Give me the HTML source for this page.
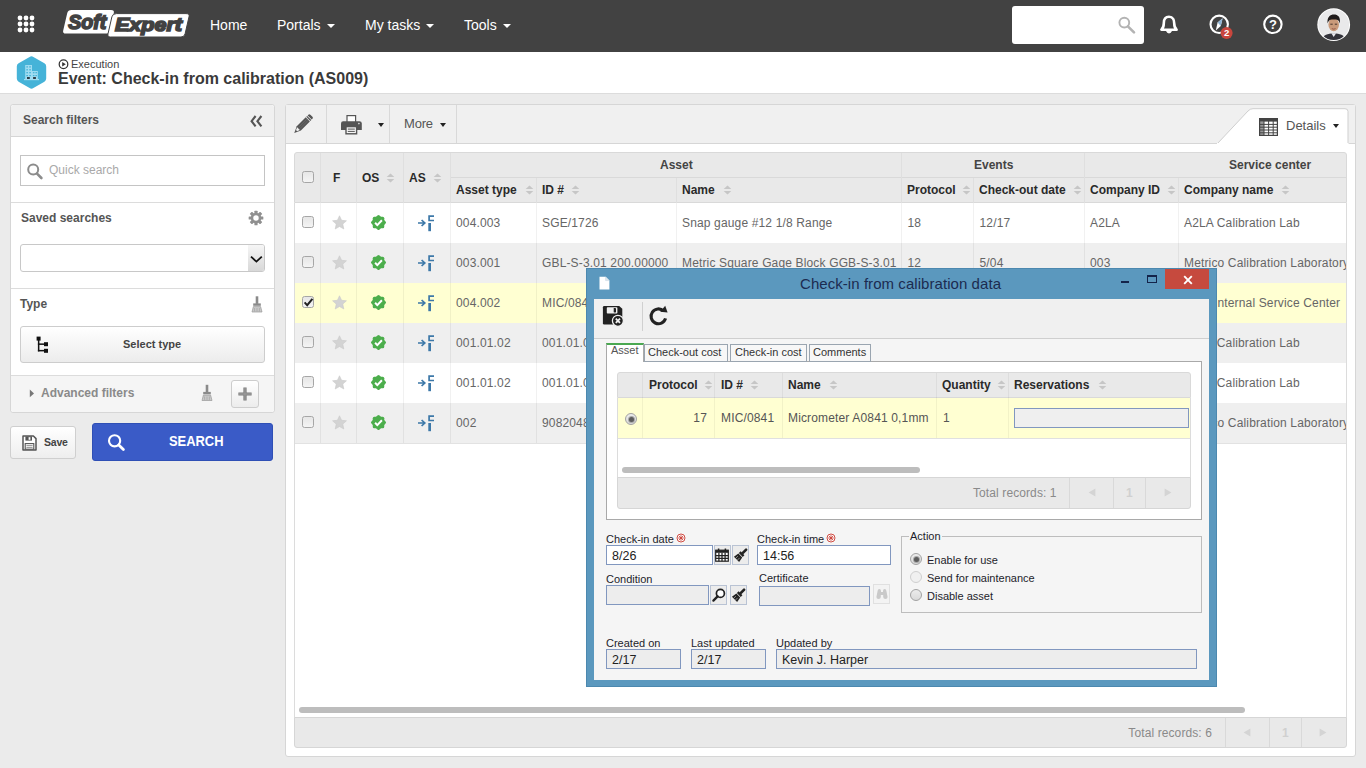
<!DOCTYPE html>
<html lang="en">
<head>
<meta charset="utf-8">
<title>Event: Check-in from calibration (AS009)</title>
<style>
*{box-sizing:border-box;margin:0;padding:0}
html,body{width:1366px;height:768px;overflow:hidden}
body{position:relative;background:#ebebeb;font-family:"Liberation Sans",Arial,sans-serif;font-size:12px;color:#555}
.abs{position:absolute}
.t{position:absolute;white-space:nowrap;line-height:1}
svg{position:absolute;overflow:visible}

/* ===== NAV ===== */
#nav{left:0;top:0;width:1366px;height:52px;background:#424242}
.navt{color:#fff;font-size:14px;top:18px}
.caret{position:absolute;width:0;height:0;border-left:4px solid transparent;border-right:4px solid transparent;border-top:4px solid #fff}
#srch{left:1012px;top:6px;width:132px;height:38px;background:#fff;border-radius:3px}
#titlebar{left:0;top:52px;width:1366px;height:42px;background:#fff;border-bottom:1px solid #dcdcdc}

/* ===== SIDEBAR ===== */
#side{left:10px;top:104px;width:265px;height:309px;background:#fff;border:1px solid #d6d6d6;border-radius:3px}
.sh{font-weight:bold;color:#555;font-size:12px}
.line{position:absolute;background:#dcdcdc;height:1px}
.vline{position:absolute;background:#dcdcdc;width:1px}

/* ===== MAIN ===== */
#main{left:285px;top:104px;width:1071px;height:653px;background:#fff;border:1px solid #d6d6d6;border-radius:3px}
#mtool{left:286px;top:105px;width:1069px;height:39px;background:#f0f0f0;border-bottom:1px solid #d6d6d6}

/* grid */
.gh{background:#e9e9e9}
.hb{font-weight:bold;color:#2a2a2a;font-size:12px}
.cell{color:#666;font-size:12px;letter-spacing:0.15px}
.cb{position:absolute;width:12px;height:12px;border:1px solid #a6a6a6;border-radius:2.5px;background:linear-gradient(#e6e6e6,#f4f4f4)}
.srt{}
.fl{font-size:11px;color:#1d1d2b}
.fv{font-size:12.5px;color:#222;margin-top:1px}
.fi{background:#fff;border:1px solid #8197bf}
.fi.dis{background:#ededed}
.fb{width:17px;height:20px;background:#ececec;border:1px solid #b9c3d4}
.fb.dis{background:#f3f3f3;border-color:#e0e0e0}
.rd{position:absolute;width:12px;height:12px;border-radius:50%;border:1px solid #a2a2a2;background:linear-gradient(#ececec,#dadada)}
.rd.on::after{content:"";position:absolute;left:2.5px;top:2.5px;width:5px;height:5px;border-radius:50%;background:#5c5c5c;box-shadow:0 0 0 1px #a8a8a8}
.rd.off{border-color:#cfcfcf;background:#f0f0f0}
</style>
</head>
<body>

<!-- ================= NAV BAR ================= -->
<div id="nav" class="abs"></div>
<svg id="appgrid" style="left:0;top:0" width="52" height="52" viewBox="0 0 52 52">
  <g fill="#fff">
    <circle cx="20" cy="18" r="2.4"/><circle cx="26" cy="18" r="2.4"/><circle cx="32" cy="18" r="2.4"/>
    <circle cx="20" cy="24" r="2.4"/><circle cx="26" cy="24" r="2.4"/><circle cx="32" cy="24" r="2.4"/>
    <circle cx="20" cy="30" r="2.4"/><circle cx="26" cy="30" r="2.4"/><circle cx="32" cy="30" r="2.4"/>
  </g>
</svg>
<svg id="logo" style="left:55px;top:0" width="145" height="52" viewBox="55 0 145 52">
  <path d="M71.5 10 H111 Q114.6 10 113.8 13.2 L109.9 30.4 Q109.2 33.5 105.8 33.5 H65.8 Q62.4 33.5 63.2 30.4 L67.2 13.2 Q68 10 71.5 10Z" fill="#fff"/>
  <path d="M116.5 13.6 H186 Q189.8 13.6 189 16.8 L185.1 33.8 Q184.4 37 181 37 H110.6 Q107.2 37 108 33.8 L111.9 16.8 Q112.6 13.6 116.5 13.6Z" fill="#fff" stroke="#424242" stroke-width="1"/>
  <text x="68.2" y="29" font-family="Liberation Sans, Arial, sans-serif" font-weight="bold" font-style="italic" font-size="19.5" fill="#424242" stroke="#424242" stroke-width="1.6" textLength="38" lengthAdjust="spacingAndGlyphs">Soft</text>
  <text x="115" y="31.2" font-family="Liberation Sans, Arial, sans-serif" font-weight="bold" font-style="italic" font-size="18.5" fill="#424242" stroke="#424242" stroke-width="1.6" textLength="67" lengthAdjust="spacingAndGlyphs">Expert</text>
</svg>
<div id="navitems">
  <span class="t navt" style="left:210px">Home</span>
  <span class="t navt" style="left:277px">Portals</span><i class="caret" style="left:327px;top:24px"></i>
  <span class="t navt" style="left:365px">My tasks</span><i class="caret" style="left:426px;top:24px"></i>
  <span class="t navt" style="left:464px">Tools</span><i class="caret" style="left:503px;top:24px"></i>
</div>
<div id="srch" class="abs"></div>
<svg style="left:1112px;top:12px" width="28" height="28" viewBox="1112 12 28 28">
  <circle cx="1124.3" cy="22.6" r="4.9" fill="none" stroke="#b3b3b3" stroke-width="1.9"/>
  <path d="M1127.9 26.3 L1134 32.4" stroke="#b3b3b3" stroke-width="2.6" stroke-linecap="round"/>
</svg>
<!-- bell -->
<svg style="left:1156px;top:12px" width="26" height="26" viewBox="1156 12 26 26">
  <path d="M1169 16.8 C1164.9 16.8 1163.8 20.2 1163.8 23.2 C1163.8 27 1162.8 28.4 1161.4 29.7 H1176.6 C1175.2 28.4 1174.2 27 1174.2 23.2 C1174.2 20.2 1173.1 16.8 1169 16.8Z" fill="none" stroke="#fff" stroke-width="2.6" stroke-linejoin="round"/>
  <path d="M1166.6 31.6 Q1169 34.6 1171.4 31.6Z" fill="#fff" stroke="#fff" stroke-width="1"/>
</svg>
<!-- compass + badge -->
<svg style="left:1205px;top:10px" width="32" height="32" viewBox="1205 10 32 32">
  <circle cx="1219.2" cy="24.3" r="8.7" fill="none" stroke="#fff" stroke-width="2.1"/>
  <path d="M1222.6 18.2 L1220.8 26 L1215.8 30.4 L1217.6 22.6Z" fill="#fff"/>
  <path d="M1222.6 18.2 L1220.8 26 L1217.6 22.6Z" fill="#8fb4d4"/>
  <circle cx="1226.6" cy="33" r="6" fill="#c9463d"/>
  <text x="1226.6" y="36.4" text-anchor="middle" font-family="Liberation Sans, Arial, sans-serif" font-weight="bold" font-size="9.5" fill="#fff">2</text>
</svg>
<!-- help -->
<svg style="left:1260px;top:12px" width="26" height="26" viewBox="1260 12 26 26">
  <circle cx="1272.9" cy="24.3" r="8.7" fill="none" stroke="#fff" stroke-width="2.1"/>
  <text x="1272.9" y="29" text-anchor="middle" font-family="Liberation Sans, Arial, sans-serif" font-weight="bold" font-size="13" fill="#fff">?</text>
</svg>
<!-- avatar -->
<svg style="left:1316px;top:7px" width="36" height="36" viewBox="1316 7 36 36">
  <defs><clipPath id="avc"><circle cx="1333.7" cy="24.7" r="15.4"/></clipPath></defs>
  <circle cx="1333.7" cy="24.7" r="16.4" fill="#fff"/>
  <g clip-path="url(#avc)">
    <rect x="1316" y="7" width="36" height="36" fill="#e9e9ea"/>
    <path d="M1322 42 C1322 35 1327 33.5 1333.7 33.5 C1340.4 33.5 1345.5 35 1345.5 42Z" fill="#33333a"/>
    <path d="M1331.3 33.2 L1333.7 37 L1336.1 33.2Z" fill="#e8e8ee"/>
    <ellipse cx="1333.7" cy="24.6" rx="5.3" ry="6.6" fill="#c99a7a"/>
    <path d="M1327.6 23.6 C1326.8 16.8 1330.4 14.6 1333.9 14.6 C1338 14.6 1340.8 17.2 1339.8 23.6 C1339.2 20.4 1338 19.2 1333.7 19.4 C1329.6 19.2 1328.4 20.6 1327.6 23.6Z" fill="#1e1a1a"/>
    <path d="M1330.3 24.2 h2.4 M1334.8 24.2 h2.4" stroke="#3a2a24" stroke-width="0.9"/>
    <path d="M1331.8 28.6 q1.9 1.1 3.8 0" stroke="#8a4a3c" stroke-width="0.8" fill="none"/>
  </g>
</svg>

<!-- ================= TITLE BAR ================= -->
<div id="titlebar" class="abs"></div>
<svg style="left:14px;top:54px" width="36" height="38" viewBox="14 54 36 38">
  <path d="M29.6 56.9 Q31.5 55.8 33.4 56.9 L44.4 63.2 Q46.2 64.3 46.2 66.4 V78.6 Q46.2 80.7 44.4 81.8 L33.4 88.1 Q31.5 89.2 29.6 88.1 L18.6 81.8 Q16.8 80.7 16.8 78.6 V66.4 Q16.8 64.3 18.6 63.2Z" fill="#45b3d8"/>
  <g fill="#9fdcf1">
    <rect x="25.2" y="65" width="6.8" height="14.6"/>
    <rect x="32" y="71" width="5.8" height="8.6"/>
    <rect x="24" y="79" width="15" height="1.2"/>
  </g>
  <g fill="#45b3d8">
    <rect x="26.3" y="66.3" width="1.7" height="1.2"/><rect x="29.2" y="66.3" width="1.7" height="1.2"/>
    <rect x="26.3" y="69.2" width="1.7" height="1.2"/><rect x="29.2" y="69.2" width="1.7" height="1.2"/>
    <rect x="26.3" y="72.1" width="1.7" height="1.2"/><rect x="29.2" y="72.1" width="1.7" height="1.2"/>
    <rect x="26.3" y="75" width="1.7" height="1.2"/><rect x="29.2" y="75" width="1.7" height="1.2"/>
    <rect x="32.9" y="72.1" width="1.6" height="1.2"/><rect x="35.4" y="72.1" width="1.6" height="1.2"/>
    <rect x="32.9" y="75" width="1.6" height="1.2"/><rect x="35.4" y="75" width="1.6" height="1.2"/>
  </g>
  <g fill="#2f3f49"><rect x="27" y="77" width="2.8" height="2"/><rect x="33.1" y="77" width="2.8" height="2"/></g>
</svg>
<svg style="left:58px;top:59px" width="11" height="11" viewBox="0 0 11 11"><circle cx="5.5" cy="5.2" r="4.3" fill="none" stroke="#333" stroke-width="1.25"/><path d="M4.2 3 V7.4 L7.8 5.2Z" fill="#333"/></svg>
<span class="t" style="left:71px;top:59px;font-size:11px;color:#444">Execution</span>
<span class="t" id="ttl" style="left:58px;top:71px;font-size:16px;color:#3a3a3a;font-weight:bold">Event: Check-in from calibration (AS009)</span>

<!-- ================= SIDEBAR ================= -->
<div id="side" class="abs"></div>
<div class="abs" style="left:11px;top:105px;width:263px;height:32px;background:#f0f0f0;border-bottom:1px solid #d6d6d6;border-radius:3px 3px 0 0"></div>
<span class="t sh" style="left:23px;top:114px">Search filters</span>
<svg style="left:248px;top:114px" width="16" height="14" viewBox="0 0 16 14">
  <path d="M7.6 2 L3.6 7.2 L7.6 12.4 M13.4 2 L9.4 7.2 L13.4 12.4" fill="none" stroke="#555" stroke-width="2.1"/>
</svg>
<!-- quick search -->
<div class="abs" style="left:20px;top:155px;width:245px;height:31px;background:#fff;border:1px solid #c4c4c4"></div>
<svg style="left:25px;top:161px" width="20" height="20" viewBox="0 0 20 20">
  <circle cx="8.2" cy="8.6" r="5" fill="none" stroke="#8c8c8c" stroke-width="2"/>
  <path d="M12 12.6 L16.4 17" stroke="#8c8c8c" stroke-width="2.6" stroke-linecap="round"/>
</svg>
<span class="t" style="left:49px;top:164px;font-size:12px;color:#a9a9a9">Quick search</span>
<div class="line" style="left:11px;top:202px;width:263px"></div>
<!-- saved searches -->
<span class="t sh" style="left:21px;top:212px">Saved searches</span>
<svg style="left:248.4px;top:210.4px" width="16" height="16" viewBox="-8.5 -8.5 17 17">
  <g fill="#909090">
    <rect x="-1.7" y="-7.8" width="3.4" height="15.6" rx="0.6"/>
    <rect x="-1.7" y="-7.8" width="3.4" height="15.6" rx="0.6" transform="rotate(45)"/>
    <rect x="-1.7" y="-7.8" width="3.4" height="15.6" rx="0.6" transform="rotate(90)"/>
    <rect x="-1.7" y="-7.8" width="3.4" height="15.6" rx="0.6" transform="rotate(135)"/>
    <circle r="5.6"/>
  </g>
  <circle r="2.9" fill="#fff"/>
</svg>
<div class="abs" style="left:20px;top:244px;width:245px;height:28px;background:#fff;border:1px solid #c8c8c8;border-radius:3px"></div>
<div class="abs" style="left:248px;top:245px;width:16px;height:26px;background:linear-gradient(#f6f6f6,#d8d8d8);border-radius:0 2px 2px 0"></div>
<svg style="left:250px;top:254.5px" width="13" height="9" viewBox="0 0 13 9"><path d="M1 1.6 L6.4 6.6 L11.8 1.6" fill="none" stroke="#111" stroke-width="1.8"/></svg>
<div class="line" style="left:11px;top:288px;width:263px"></div>
<!-- type -->
<span class="t sh" style="left:20px;top:298px">Type</span>
<svg class="brush" style="left:251px;top:296px" width="12" height="17" viewBox="0 0 12 17">
  <rect x="4.7" y="0.3" width="2.6" height="7.6" fill="#8a8a8a"/>
  <rect x="2.2" y="7.4" width="7.6" height="2.4" fill="#8a8a8a"/>
  <path d="M2.4 10.6 H9.6 L11 16 H1Z" fill="#c9c9c9" stroke="#9a9a9a" stroke-width="0.7"/>
  <path d="M3.6 12 V15.4 M6 12 V15.4 M8.4 12 V15.4" stroke="#9a9a9a" stroke-width="0.6"/>
</svg>
<div class="abs" style="left:20px;top:326px;width:245px;height:37px;background:linear-gradient(#fff,#ececec);border:1px solid #cdcdcd;border-radius:3px"></div>
<svg style="left:36px;top:336px" width="14" height="18" viewBox="0 0 14 18">
  <g fill="#111">
    <rect x="0.6" y="0.6" width="4" height="4"/>
    <rect x="1.9" y="4" width="1.5" height="11.4"/>
    <rect x="1.9" y="7.4" width="6.6" height="1.5"/>
    <rect x="1.9" y="13.9" width="6.6" height="1.5"/>
    <rect x="8" y="6.2" width="4" height="4"/>
    <rect x="8" y="12.8" width="4" height="4"/>
  </g>
</svg>
<span class="t" style="left:123px;top:339px;font-size:11px;font-weight:bold;color:#444">Select type</span>
<!-- advanced filters -->
<div class="abs" style="left:11px;top:375px;width:263px;height:37px;background:#f5f5f5;border-top:1px solid #dcdcdc;border-radius:0 0 3px 3px"></div>
<svg style="left:29px;top:389px" width="6" height="9" viewBox="0 0 6 9"><path d="M0.8 0.6 L5 4.4 L0.8 8.2Z" fill="#777"/></svg>
<span class="t" style="left:41px;top:387px;font-size:12px;font-weight:bold;color:#8a8a8a">Advanced filters</span>
<svg class="brush" style="left:201px;top:384px" width="12" height="18" viewBox="0 0 12 17">
  <rect x="4.7" y="0.3" width="2.6" height="7.6" fill="#8a8a8a"/>
  <rect x="2.2" y="7.4" width="7.6" height="2.4" fill="#8a8a8a"/>
  <path d="M2.4 10.6 H9.6 L11 16 H1Z" fill="#c9c9c9" stroke="#9a9a9a" stroke-width="0.7"/>
  <path d="M3.6 12 V15.4 M6 12 V15.4 M8.4 12 V15.4" stroke="#9a9a9a" stroke-width="0.6"/>
</svg>
<div class="abs" style="left:231px;top:380px;width:28px;height:28px;background:linear-gradient(#fff,#ececec);border:1px solid #cdcdcd;border-radius:3px"></div>
<svg style="left:237px;top:386px" width="16" height="16" viewBox="0 0 16 16"><path d="M8 1.4 V14.6 M1.4 8 H14.6" stroke="#7a7a7a" stroke-width="3.2"/><path d="M8 2 V14 M2 8 H14" stroke="#999" stroke-width="1.4"/></svg>
<!-- save / search -->
<div class="abs" style="left:10px;top:426px;width:66px;height:33px;background:linear-gradient(#fff,#eee);border:1px solid #cfcfcf;border-radius:3px"></div>
<svg style="left:22px;top:435px" width="15" height="16" viewBox="0 0 15 16">
  <path d="M1 1 H11.4 L14 3.6 V15 H1Z" fill="#fff" stroke="#555" stroke-width="1.5" stroke-linejoin="round"/>
  <rect x="3.4" y="1.4" width="6.6" height="4.2" fill="#555"/>
  <rect x="6.6" y="2.2" width="1.8" height="2.6" fill="#fff"/>
  <rect x="3.2" y="8.6" width="8.6" height="5.6" fill="#fff" stroke="#555" stroke-width="1.1"/>
  <path d="M4.4 10.6 H10.6 M4.4 12.4 H10.6" stroke="#777" stroke-width="0.8"/>
</svg>
<span class="t" style="left:44px;top:437px;font-size:10.5px;font-weight:bold;color:#444;letter-spacing:-0.2px">Save</span>
<div class="abs" style="left:92px;top:423px;width:181px;height:38px;background:#3a5bc7;border:1px solid #2f4fb5;border-radius:3px"></div>
<svg style="left:106px;top:432px" width="20" height="20" viewBox="0 0 20 20">
  <circle cx="8.6" cy="8.8" r="5.6" fill="none" stroke="#fff" stroke-width="2.1"/>
  <path d="M12.8 13 L17.4 17.6" stroke="#fff" stroke-width="2.8" stroke-linecap="round"/>
</svg>
<span class="t" id="searchtxt" style="left:169px;top:433px;font-size:15px;font-weight:bold;color:#fff;transform:scaleX(0.86);transform-origin:0 0">SEARCH</span>

<!-- ================= MAIN PANEL ================= -->
<div id="main" class="abs"></div>
<div id="mtool" class="abs"></div>
<div class="vline" style="left:326px;top:105px;height:38px;background:#d9d9d9"></div>
<div class="vline" style="left:389px;top:105px;height:38px;background:#d9d9d9"></div>
<div class="vline" style="left:456px;top:105px;height:38px;background:#d9d9d9"></div>
<svg style="left:293px;top:114px" width="20" height="20" viewBox="0 0 20 20">
  <g transform="translate(10.2 10) rotate(45)">
    <path d="M-2.9 -10.2 Q-2.9 -11.6 -1.5 -11.6 H1.5 Q2.9 -11.6 2.9 -10.2 V-9.2 H-2.9Z" fill="#555"/>
    <rect x="-2.9" y="-8.5" width="5.8" height="1.3" fill="#555"/>
    <path d="M-2.9 -6.5 H2.9 V6.2 L0 12.6 L-2.9 6.2Z" fill="#555"/>
    <path d="M-1.9 6.6 H1.9 L0.75 9.4 H-0.75Z" fill="#f0f0f0"/>
    <path d="M-0.95 -6 V5.6 M0.95 -6 V5.6" stroke="#777" stroke-width="0.5"/>
  </g>
</svg>
<svg style="left:340px;top:114px" width="23" height="21" viewBox="0 0 23 21">
  <rect x="7" y="1.6" width="8.6" height="7" fill="#fff" stroke="#555" stroke-width="1.2"/>
  <path d="M3.2 7.2 H19.4 Q21.8 7.2 21.8 9.6 V16 H1 V9.6 Q1 7.2 3.2 7.2Z" fill="#555"/>
  <circle cx="18.9" cy="9.6" r="0.8" fill="#e8e8e8"/>
  <rect x="6" y="12.6" width="10.6" height="7.2" fill="#f6f6f6" stroke="#555" stroke-width="1.4"/>
  <path d="M7.8 15.1 H14.8 M7.8 17.4 H14.8" stroke="#555" stroke-width="1"/>
</svg>
<i class="caret" style="left:378px;top:123px;border-top-color:#222;border-width:4px 3.5px 0 3.5px"></i>
<span class="t" style="left:404px;top:117px;font-size:13px;color:#555;letter-spacing:-0.2px">More</span>
<i class="caret" style="left:440px;top:123px;border-top-color:#222;border-width:4px 3.5px 0 3.5px"></i>
<svg style="left:1210px;top:105px" width="145" height="39" viewBox="1210 105 145 39">
  <path d="M1217.5 143.5 L1248 111 Q1250 108.7 1253 108.7 H1345 Q1348 108.7 1348 111.5 V143.5" fill="#fff" stroke="#cfcfcf" stroke-width="1"/>
  <path d="M1348 143.5 H1355" stroke="#d6d6d6" stroke-width="1"/>
  <rect x="1217" y="143" width="131.5" height="1.6" fill="#fff"/>
</svg>
<svg style="left:1259px;top:117.5px" width="19" height="18" viewBox="0 0 19 18">
  <rect x="0.6" y="0.6" width="17.8" height="16.8" fill="#fff" stroke="#444" stroke-width="1.2"/>
  <rect x="0.6" y="0.6" width="17.8" height="3" fill="#444"/>
  <path d="M0.6 6.4 H18.4 M0.6 9.2 H18.4 M0.6 12 H18.4 M0.6 14.8 H18.4 M5 3 V17.4 M9.6 3 V17.4 M14.2 3 V17.4" stroke="#444" stroke-width="1"/>
  <rect x="0.6" y="3.4" width="4.4" height="14" fill="#444" opacity="0.55"/>
</svg>
<span class="t" style="left:1286px;top:119px;font-size:13px;color:#555">Details</span>
<i class="caret" style="left:1333px;top:124px;border-top-color:#222;border-width:4px 3.5px 0 3.5px"></i>
<div class="abs gh" style="left:294px;top:152px;width:1053px;height:51px;border:1px solid #d9d9d9;border-radius:3px 3px 0 0"></div>
<div class="line" style="left:450px;top:177px;width:896px;background:#d9d9d9"></div>
<div class="line" style="left:295px;top:202px;width:1051px;background:#d9d9d9"></div>
<div class="vline" style="left:320px;top:153px;height:50px;background:#dfdfdf"></div>
<div class="vline" style="left:356px;top:153px;height:50px;background:#dfdfdf"></div>
<div class="vline" style="left:403px;top:153px;height:50px;background:#dfdfdf"></div>
<div class="vline" style="left:450px;top:153px;height:50px;background:#dfdfdf"></div>
<div class="vline" style="left:901px;top:153px;height:50px;background:#dfdfdf"></div>
<div class="vline" style="left:1084px;top:153px;height:50px;background:#dfdfdf"></div>
<div class="vline" style="left:536px;top:178px;height:25px;background:#dfdfdf"></div>
<div class="vline" style="left:676px;top:178px;height:25px;background:#dfdfdf"></div>
<div class="vline" style="left:973px;top:178px;height:25px;background:#dfdfdf"></div>
<div class="vline" style="left:1178px;top:178px;height:25px;background:#dfdfdf"></div>
<div class="cb" style="left:302px;top:171px"></div>
<span class="t hb" style="left:333px;top:172px">F</span>
<span class="t hb" style="left:362px;top:172px">OS</span>
<svg class="srt" style="left:385.5px;top:173px" width="9" height="10" viewBox="0 0 8 9"><path d="M4 0.4 L7.4 3.6 H0.6Z M4 8.6 L7.4 5.4 H0.6Z" fill="#c6c6c6"/></svg>
<span class="t hb" style="left:409px;top:172px">AS</span>
<svg class="srt" style="left:432.5px;top:173px" width="9" height="10" viewBox="0 0 8 9"><path d="M4 0.4 L7.4 3.6 H0.6Z M4 8.6 L7.4 5.4 H0.6Z" fill="#c6c6c6"/></svg>
<span class="t hb" style="left:660px;top:159px;color:#444">Asset</span>
<span class="t hb" style="left:974px;top:159px;color:#444">Events</span>
<span class="t hb" style="left:1229px;top:159px;color:#444">Service center</span>
<span class="t hb" style="left:456px;top:184px">Asset type</span>
<svg class="srt" style="left:524.5px;top:185px" width="9" height="10" viewBox="0 0 8 9"><path d="M4 0.4 L7.4 3.6 H0.6Z M4 8.6 L7.4 5.4 H0.6Z" fill="#c6c6c6"/></svg>
<span class="t hb" style="left:542px;top:184px">ID #</span>
<svg class="srt" style="left:570.5px;top:185px" width="9" height="10" viewBox="0 0 8 9"><path d="M4 0.4 L7.4 3.6 H0.6Z M4 8.6 L7.4 5.4 H0.6Z" fill="#c6c6c6"/></svg>
<span class="t hb" style="left:682px;top:184px">Name</span>
<svg class="srt" style="left:722.5px;top:185px" width="9" height="10" viewBox="0 0 8 9"><path d="M4 0.4 L7.4 3.6 H0.6Z M4 8.6 L7.4 5.4 H0.6Z" fill="#c6c6c6"/></svg>
<span class="t hb" style="left:907px;top:184px">Protocol</span>
<svg class="srt" style="left:961.5px;top:185px" width="9" height="10" viewBox="0 0 8 9"><path d="M4 0.4 L7.4 3.6 H0.6Z M4 8.6 L7.4 5.4 H0.6Z" fill="#c6c6c6"/></svg>
<span class="t hb" style="left:979px;top:184px">Check-out date</span>
<svg class="srt" style="left:1072.5px;top:185px" width="9" height="10" viewBox="0 0 8 9"><path d="M4 0.4 L7.4 3.6 H0.6Z M4 8.6 L7.4 5.4 H0.6Z" fill="#c6c6c6"/></svg>
<span class="t hb" style="left:1090px;top:184px">Company ID</span>
<svg class="srt" style="left:1166.5px;top:185px" width="9" height="10" viewBox="0 0 8 9"><path d="M4 0.4 L7.4 3.6 H0.6Z M4 8.6 L7.4 5.4 H0.6Z" fill="#c6c6c6"/></svg>
<span class="t hb" style="left:1184px;top:184px">Company name</span>
<svg class="srt" style="left:1280.5px;top:185px" width="9" height="10" viewBox="0 0 8 9"><path d="M4 0.4 L7.4 3.6 H0.6Z M4 8.6 L7.4 5.4 H0.6Z" fill="#c6c6c6"/></svg>
<div class="abs" style="left:295px;top:203px;width:1051px;height:40px;background:#fff"></div>
<div class="cb" style="left:302px;top:216px"></div>
<svg style="left:331.6px;top:214.8px" width="15" height="15" viewBox="0 0 16 16"><path d="M8 0.8 L10.2 5.6 L15.4 6.2 L11.5 9.7 L12.6 14.9 L8 12.3 L3.4 14.9 L4.5 9.7 L0.6 6.2 L5.8 5.6Z" fill="#d3d3d3" stroke="#c8c8c8" stroke-width="0.6" stroke-linejoin="round"/></svg>
<svg style="left:370.4px;top:214px" width="17" height="17" viewBox="-8.5 -8.5 17 17"><g fill="#4cae4c"><rect x="-5.75" y="-5.75" width="11.5" height="11.5" rx="1.5"/><rect x="-5.75" y="-5.75" width="11.5" height="11.5" rx="1.5" transform="rotate(45)"/></g><path d="M-3.4 0.3 L-1.2 2.6 L3.4 -2.3" fill="none" stroke="#fff" stroke-width="2"/></svg>
<svg style="left:417px;top:213px" width="18" height="19" viewBox="0 0 18 19"><path d="M1 10 H7.4 M4.6 7 L7.8 10 L4.6 13" fill="none" stroke="#3d78a8" stroke-width="1.7"/><rect x="11.3" y="10" width="2.7" height="8.2" fill="#3d78a8"/><path d="M17 3.2 H12.1 V7.5 H17" fill="none" stroke="#3d78a8" stroke-width="1.7"/></svg>
<span class="t cell" style="left:456px;top:217px">004.003</span>
<span class="t cell" style="left:542px;top:217px">SGE/1726</span>
<span class="t cell" style="left:682px;top:217px">Snap gauge #12 1/8 Range</span>
<span class="t cell" style="left:907.5px;top:217px">18</span>
<span class="t cell" style="left:979.5px;top:217px">12/17</span>
<span class="t cell" style="left:1090px;top:217px">A2LA</span>
<span class="t cell" style="left:1184px;top:217px">A2LA Calibration Lab</span>
<div class="abs" style="left:295px;top:243px;width:1051px;height:40px;background:#efefef"></div>
<div class="cb" style="left:302px;top:256px"></div>
<svg style="left:331.6px;top:254.8px" width="15" height="15" viewBox="0 0 16 16"><path d="M8 0.8 L10.2 5.6 L15.4 6.2 L11.5 9.7 L12.6 14.9 L8 12.3 L3.4 14.9 L4.5 9.7 L0.6 6.2 L5.8 5.6Z" fill="#d3d3d3" stroke="#c8c8c8" stroke-width="0.6" stroke-linejoin="round"/></svg>
<svg style="left:370.4px;top:254px" width="17" height="17" viewBox="-8.5 -8.5 17 17"><g fill="#4cae4c"><rect x="-5.75" y="-5.75" width="11.5" height="11.5" rx="1.5"/><rect x="-5.75" y="-5.75" width="11.5" height="11.5" rx="1.5" transform="rotate(45)"/></g><path d="M-3.4 0.3 L-1.2 2.6 L3.4 -2.3" fill="none" stroke="#fff" stroke-width="2"/></svg>
<svg style="left:417px;top:253px" width="18" height="19" viewBox="0 0 18 19"><path d="M1 10 H7.4 M4.6 7 L7.8 10 L4.6 13" fill="none" stroke="#3d78a8" stroke-width="1.7"/><rect x="11.3" y="10" width="2.7" height="8.2" fill="#3d78a8"/><path d="M17 3.2 H12.1 V7.5 H17" fill="none" stroke="#3d78a8" stroke-width="1.7"/></svg>
<span class="t cell" style="left:456px;top:257px">003.001</span>
<span class="t cell" style="left:542px;top:257px">GBL-S-3.01 200.00000</span>
<span class="t cell" style="left:682px;top:257px">Metric Square Gage Block GGB-S-3.01</span>
<span class="t cell" style="left:907.5px;top:257px">12</span>
<span class="t cell" style="left:979.5px;top:257px">5/04</span>
<span class="t cell" style="left:1090px;top:257px">003</span>
<span class="t cell" style="left:1184px;top:257px;width:162px;overflow:hidden;height:16px">Metrico Calibration Laboratory</span>
<div class="abs" style="left:295px;top:283px;width:1051px;height:40px;background:#ffffd2"></div>
<div class="cb" style="left:302px;top:296px"></div><svg style="left:303px;top:297px" width="11" height="11" viewBox="0 0 11 11"><path d="M1.6 5.4 L4.2 8.2 L9.4 1.8" fill="none" stroke="#222" stroke-width="2"/></svg>
<svg style="left:331.6px;top:294.8px" width="15" height="15" viewBox="0 0 16 16"><path d="M8 0.8 L10.2 5.6 L15.4 6.2 L11.5 9.7 L12.6 14.9 L8 12.3 L3.4 14.9 L4.5 9.7 L0.6 6.2 L5.8 5.6Z" fill="#d3d3d3" stroke="#c8c8c8" stroke-width="0.6" stroke-linejoin="round"/></svg>
<svg style="left:370.4px;top:294px" width="17" height="17" viewBox="-8.5 -8.5 17 17"><g fill="#4cae4c"><rect x="-5.75" y="-5.75" width="11.5" height="11.5" rx="1.5"/><rect x="-5.75" y="-5.75" width="11.5" height="11.5" rx="1.5" transform="rotate(45)"/></g><path d="M-3.4 0.3 L-1.2 2.6 L3.4 -2.3" fill="none" stroke="#fff" stroke-width="2"/></svg>
<svg style="left:417px;top:293px" width="18" height="19" viewBox="0 0 18 19"><path d="M1 10 H7.4 M4.6 7 L7.8 10 L4.6 13" fill="none" stroke="#3d78a8" stroke-width="1.7"/><rect x="11.3" y="10" width="2.7" height="8.2" fill="#3d78a8"/><path d="M17 3.2 H12.1 V7.5 H17" fill="none" stroke="#3d78a8" stroke-width="1.7"/></svg>
<span class="t cell" style="left:456px;top:297px">004.002</span>
<span class="t cell" style="left:542px;top:297px">MIC/0841</span>
<span class="t cell" style="left:682px;top:297px">Micrometer A0841 0,1mm</span>
<span class="t cell" style="left:907.5px;top:297px">17</span>
<span class="t cell" style="left:979.5px;top:297px">2/17</span>
<span class="t cell" style="left:1090px;top:297px">000</span>
<span class="t cell" style="left:1214px;top:297px">Internal Service Center</span>
<div class="abs" style="left:295px;top:323px;width:1051px;height:40px;background:#efefef"></div>
<div class="cb" style="left:302px;top:336px"></div>
<svg style="left:331.6px;top:334.8px" width="15" height="15" viewBox="0 0 16 16"><path d="M8 0.8 L10.2 5.6 L15.4 6.2 L11.5 9.7 L12.6 14.9 L8 12.3 L3.4 14.9 L4.5 9.7 L0.6 6.2 L5.8 5.6Z" fill="#d3d3d3" stroke="#c8c8c8" stroke-width="0.6" stroke-linejoin="round"/></svg>
<svg style="left:370.4px;top:334px" width="17" height="17" viewBox="-8.5 -8.5 17 17"><g fill="#4cae4c"><rect x="-5.75" y="-5.75" width="11.5" height="11.5" rx="1.5"/><rect x="-5.75" y="-5.75" width="11.5" height="11.5" rx="1.5" transform="rotate(45)"/></g><path d="M-3.4 0.3 L-1.2 2.6 L3.4 -2.3" fill="none" stroke="#fff" stroke-width="2"/></svg>
<svg style="left:417px;top:333px" width="18" height="19" viewBox="0 0 18 19"><path d="M1 10 H7.4 M4.6 7 L7.8 10 L4.6 13" fill="none" stroke="#3d78a8" stroke-width="1.7"/><rect x="11.3" y="10" width="2.7" height="8.2" fill="#3d78a8"/><path d="M17 3.2 H12.1 V7.5 H17" fill="none" stroke="#3d78a8" stroke-width="1.7"/></svg>
<span class="t cell" style="left:456px;top:337px">001.01.02</span>
<span class="t cell" style="left:542px;top:337px">001.01.02.0001</span>
<span class="t cell" style="left:682px;top:337px">Caliper 150mm</span>
<span class="t cell" style="left:907.5px;top:337px">9</span>
<span class="t cell" style="left:979.5px;top:337px">3/11</span>
<span class="t cell" style="left:1090px;top:337px">A2LA</span>
<span class="t cell" style="left:1184px;top:337px">A2LA Calibration Lab</span>
<div class="abs" style="left:295px;top:363px;width:1051px;height:40px;background:#fff"></div>
<div class="cb" style="left:302px;top:376px"></div>
<svg style="left:331.6px;top:374.8px" width="15" height="15" viewBox="0 0 16 16"><path d="M8 0.8 L10.2 5.6 L15.4 6.2 L11.5 9.7 L12.6 14.9 L8 12.3 L3.4 14.9 L4.5 9.7 L0.6 6.2 L5.8 5.6Z" fill="#d3d3d3" stroke="#c8c8c8" stroke-width="0.6" stroke-linejoin="round"/></svg>
<svg style="left:370.4px;top:374px" width="17" height="17" viewBox="-8.5 -8.5 17 17"><g fill="#4cae4c"><rect x="-5.75" y="-5.75" width="11.5" height="11.5" rx="1.5"/><rect x="-5.75" y="-5.75" width="11.5" height="11.5" rx="1.5" transform="rotate(45)"/></g><path d="M-3.4 0.3 L-1.2 2.6 L3.4 -2.3" fill="none" stroke="#fff" stroke-width="2"/></svg>
<svg style="left:417px;top:373px" width="18" height="19" viewBox="0 0 18 19"><path d="M1 10 H7.4 M4.6 7 L7.8 10 L4.6 13" fill="none" stroke="#3d78a8" stroke-width="1.7"/><rect x="11.3" y="10" width="2.7" height="8.2" fill="#3d78a8"/><path d="M17 3.2 H12.1 V7.5 H17" fill="none" stroke="#3d78a8" stroke-width="1.7"/></svg>
<span class="t cell" style="left:456px;top:377px">001.01.02</span>
<span class="t cell" style="left:542px;top:377px">001.01.02.0002</span>
<span class="t cell" style="left:682px;top:377px">Caliper 200mm</span>
<span class="t cell" style="left:907.5px;top:377px">8</span>
<span class="t cell" style="left:979.5px;top:377px">3/11</span>
<span class="t cell" style="left:1090px;top:377px">A2LA</span>
<span class="t cell" style="left:1184px;top:377px">A2LA Calibration Lab</span>
<div class="abs" style="left:295px;top:403px;width:1051px;height:40px;background:#efefef"></div>
<div class="cb" style="left:302px;top:416px"></div>
<svg style="left:331.6px;top:414.8px" width="15" height="15" viewBox="0 0 16 16"><path d="M8 0.8 L10.2 5.6 L15.4 6.2 L11.5 9.7 L12.6 14.9 L8 12.3 L3.4 14.9 L4.5 9.7 L0.6 6.2 L5.8 5.6Z" fill="#d3d3d3" stroke="#c8c8c8" stroke-width="0.6" stroke-linejoin="round"/></svg>
<svg style="left:370.4px;top:414px" width="17" height="17" viewBox="-8.5 -8.5 17 17"><g fill="#4cae4c"><rect x="-5.75" y="-5.75" width="11.5" height="11.5" rx="1.5"/><rect x="-5.75" y="-5.75" width="11.5" height="11.5" rx="1.5" transform="rotate(45)"/></g><path d="M-3.4 0.3 L-1.2 2.6 L3.4 -2.3" fill="none" stroke="#fff" stroke-width="2"/></svg>
<svg style="left:417px;top:413px" width="18" height="19" viewBox="0 0 18 19"><path d="M1 10 H7.4 M4.6 7 L7.8 10 L4.6 13" fill="none" stroke="#3d78a8" stroke-width="1.7"/><rect x="11.3" y="10" width="2.7" height="8.2" fill="#3d78a8"/><path d="M17 3.2 H12.1 V7.5 H17" fill="none" stroke="#3d78a8" stroke-width="1.7"/></svg>
<span class="t cell" style="left:456px;top:417px">002</span>
<span class="t cell" style="left:542px;top:417px">90820481</span>
<span class="t cell" style="left:682px;top:417px">Pressure gauge</span>
<span class="t cell" style="left:907.5px;top:417px">5</span>
<span class="t cell" style="left:979.5px;top:417px">4/02</span>
<span class="t cell" style="left:1090px;top:417px">003</span>
<span class="t cell" style="left:1184px;top:417px;width:162px;overflow:hidden;height:16px">Metrico Calibration Laboratory</span>
<div class="vline" style="left:320px;top:203px;height:240px;background:rgba(0,0,0,0.055)"></div>
<div class="vline" style="left:356px;top:203px;height:240px;background:rgba(0,0,0,0.055)"></div>
<div class="vline" style="left:403px;top:203px;height:240px;background:rgba(0,0,0,0.055)"></div>
<div class="vline" style="left:450px;top:203px;height:240px;background:rgba(0,0,0,0.055)"></div>
<div class="vline" style="left:536px;top:203px;height:240px;background:rgba(0,0,0,0.055)"></div>
<div class="vline" style="left:676px;top:203px;height:240px;background:rgba(0,0,0,0.055)"></div>
<div class="vline" style="left:901px;top:203px;height:240px;background:rgba(0,0,0,0.055)"></div>
<div class="vline" style="left:973px;top:203px;height:240px;background:rgba(0,0,0,0.055)"></div>
<div class="vline" style="left:1084px;top:203px;height:240px;background:rgba(0,0,0,0.055)"></div>
<div class="vline" style="left:1178px;top:203px;height:240px;background:rgba(0,0,0,0.055)"></div>
<div class="vline" style="left:294px;top:203px;height:515px;background:#dcdcdc"></div>
<div class="vline" style="left:1346px;top:203px;height:515px;background:#dcdcdc"></div>
<div class="line" style="left:295px;top:443px;width:1051px;background:#e2e2e2"></div>
<div class="abs" style="left:299px;top:707px;width:946px;height:6px;border-radius:3px;background:#bdbdbd"></div>
<div class="abs" style="left:294px;top:717px;width:1053px;height:31px;background:#e9e9e9;border:1px solid #d6d6d6;border-radius:0 0 3px 3px"></div>
<span class="t" id="tot6" style="right:154px;top:727px;font-size:12px;color:#8a8a8a;letter-spacing:0.1px">Total records: 6</span>
<div class="vline" style="left:1225px;top:718px;height:29px;background:#d9d9d9"></div>
<div class="vline" style="left:1269px;top:718px;height:29px;background:#d9d9d9"></div>
<div class="vline" style="left:1301px;top:718px;height:29px;background:#d9d9d9"></div>
<svg style="left:1243px;top:728px" width="8" height="9" viewBox="0 0 8 9"><path d="M7.4 0.6 V8.4 L0.6 4.5Z" fill="#d4d4d4"/></svg>
<span class="t" style="left:1282px;top:727px;font-size:12px;font-weight:bold;color:#d0d0d0">1</span>
<svg style="left:1319px;top:728px" width="8" height="9" viewBox="0 0 8 9"><path d="M0.6 0.6 V8.4 L7.4 4.5Z" fill="#d4d4d4"/></svg>

<!-- ================= DIALOG ================= -->
<div id="dlg" class="abs" style="left:586px;top:268px;width:631px;height:419px;background:#5b98be;border:1px solid #4c88af"></div>
<div id="dlgbody" class="abs" style="left:594px;top:299px;width:615px;height:381px;background:#f5f5f5"></div>
<svg style="left:599px;top:276px" width="11" height="14" viewBox="0 0 11 14"><path d="M0.5 0.8 H6.6 L10.4 4.6 V13.4 H0.5Z" fill="#fff"/><path d="M6.6 0.8 V4.6 H10.4" fill="#dfe8f0" stroke="#c9d6e2" stroke-width="0.6"/></svg>
<span class="t" id="dtitle" style="left:800px;top:276px;font-size:15px;letter-spacing:0.06px;color:#1b2b50">Check-in from calibration data</span>
<div class="abs" style="left:1121px;top:281px;width:8px;height:2px;background:#14244a"></div>
<div class="abs" style="left:1147px;top:275px;width:10px;height:8px;border:1px solid #14244a;border-top-width:2px"></div>
<div class="abs" style="left:1165px;top:269px;width:44px;height:20px;background:#c64a3e"></div>
<svg style="left:1182.5px;top:274.5px" width="10" height="10" viewBox="0 0 10 10"><path d="M1.2 1.2 L8.8 8.8 M8.8 1.2 L1.2 8.8" stroke="#fff" stroke-width="1.9"/></svg>
<div class="abs" style="left:594px;top:299px;width:615px;height:40px;background:#f0f0f0;border-bottom:1px solid #cfcfcf"></div>
<svg style="left:602px;top:305px" width="23" height="22" viewBox="0 0 23 22">
  <path d="M2.2 0.9 H17.2 L20.3 3.8 V18.2 Q20.3 19.6 19 19.6 H2.2 Q0.9 19.6 0.9 18.2 V2.2 Q0.9 0.9 2.2 0.9Z" fill="#222"/>
  <rect x="4.8" y="2.3" width="10.6" height="6.2" rx="0.8" fill="#f0f0f0"/><rect x="11.7" y="3.1" width="2.3" height="4.4" rx="0.4" fill="#222"/>
  <circle cx="15.9" cy="15.8" r="5.5" fill="#222" stroke="#f0f0f0" stroke-width="1.3"/>
  <path d="M13.8 13.7 L18 17.9 M18 13.7 L13.8 17.9" stroke="#f0f0f0" stroke-width="1.8"/>
</svg>
<div class="vline" style="left:642px;top:302px;height:29px;background:#d0d0d0"></div>
<svg style="left:648px;top:305px" width="21" height="22" viewBox="0 0 21 22">
  <path d="M15.6 6 A7.4 7.4 0 1 0 17.55 13.4" fill="none" stroke="#222" stroke-width="3.1"/>
  <path d="M17.2 0.8 L19.6 7.6 L12.2 6.8Z" fill="#222"/>
</svg>
<div class="abs" style="left:606px;top:361px;width:596px;height:159px;background:#fff;border:1px solid #a9a9a9"></div>
<div class="abs" style="left:606px;top:343px;width:38px;height:19px;background:#fff;border:1px solid #a9a9a9;border-top:2px solid #4aa851;border-bottom:none"></div>
<span class="t" style="left:611px;top:345px;font-size:11px;color:#555">Asset</span>
<div class="abs" style="left:644px;top:344px;width:84px;height:18px;background:#f7f7f7;border:1px solid #9aa5b0"></div>
<span class="t" style="left:648px;top:347px;font-size:11px;color:#333">Check-out cost</span>
<div class="abs" style="left:730px;top:344px;width:77px;height:18px;background:#f7f7f7;border:1px solid #9aa5b0"></div>
<span class="t" style="left:735px;top:347px;font-size:11px;color:#333">Check-in cost</span>
<div class="abs" style="left:809px;top:344px;width:62px;height:18px;background:#f7f7f7;border:1px solid #9aa5b0"></div>
<span class="t" style="left:813px;top:347px;font-size:11px;color:#333">Comments</span>
<div class="abs gh" style="left:617px;top:372px;width:574px;height:26px;border:1px solid #d9d9d9;border-radius:3px 3px 0 0"></div>
<div class="abs" style="left:617px;top:398px;width:574px;height:40px;background:#ffffd2"></div>
<div class="line" style="left:617px;top:438px;width:574px;background:#e0e0e0"></div>
<div class="vline" style="left:642px;top:373px;height:65px;background:rgba(0,0,0,0.05)"></div>
<div class="vline" style="left:714px;top:373px;height:65px;background:rgba(0,0,0,0.05)"></div>
<div class="vline" style="left:782px;top:373px;height:65px;background:rgba(0,0,0,0.05)"></div>
<div class="vline" style="left:936px;top:373px;height:65px;background:rgba(0,0,0,0.05)"></div>
<div class="vline" style="left:1008px;top:373px;height:65px;background:rgba(0,0,0,0.05)"></div>
<div class="vline" style="left:617px;top:398px;height:80px;background:#dcdcdc"></div>
<div class="vline" style="left:1190px;top:398px;height:80px;background:#dcdcdc"></div>
<span class="t hb" style="left:649px;top:379px">Protocol</span>
<svg class="srt" style="left:703.5px;top:380px" width="9" height="10" viewBox="0 0 8 9"><path d="M4 0.4 L7.4 3.6 H0.6Z M4 8.6 L7.4 5.4 H0.6Z" fill="#c6c6c6"/></svg>
<span class="t hb" style="left:721px;top:379px">ID #</span>
<svg class="srt" style="left:749.5px;top:380px" width="9" height="10" viewBox="0 0 8 9"><path d="M4 0.4 L7.4 3.6 H0.6Z M4 8.6 L7.4 5.4 H0.6Z" fill="#c6c6c6"/></svg>
<span class="t hb" style="left:788px;top:379px">Name</span>
<svg class="srt" style="left:828.5px;top:380px" width="9" height="10" viewBox="0 0 8 9"><path d="M4 0.4 L7.4 3.6 H0.6Z M4 8.6 L7.4 5.4 H0.6Z" fill="#c6c6c6"/></svg>
<span class="t hb" style="left:942px;top:379px">Quantity</span>
<svg class="srt" style="left:996.5px;top:380px" width="9" height="10" viewBox="0 0 8 9"><path d="M4 0.4 L7.4 3.6 H0.6Z M4 8.6 L7.4 5.4 H0.6Z" fill="#c6c6c6"/></svg>
<span class="t hb" style="left:1014px;top:379px">Reservations</span>
<svg class="srt" style="left:1097.5px;top:380px" width="9" height="10" viewBox="0 0 8 9"><path d="M4 0.4 L7.4 3.6 H0.6Z M4 8.6 L7.4 5.4 H0.6Z" fill="#c6c6c6"/></svg>
<div class="rd on" style="left:625px;top:413px"></div>
<span class="t cell" style="right:659px;top:412px;color:#555">17</span>
<span class="t cell" style="left:721px;top:412px;color:#555">MIC/0841</span>
<span class="t cell" style="left:788px;top:412px;color:#555">Micrometer A0841 0,1mm</span>
<span class="t cell" style="left:943px;top:412px;color:#555">1</span>
<div class="abs" style="left:1014px;top:408px;width:175px;height:20px;background:#efefef;border:1px solid #8197bf"></div>
<div class="abs" style="left:622px;top:467px;width:298px;height:6px;border-radius:3px;background:#bdbdbd"></div>
<div class="abs" style="left:617px;top:477px;width:574px;height:32px;background:#e9e9e9;border:1px solid #d6d6d6;border-radius:0 0 3px 3px"></div>
<span class="t" id="tot1" style="left:973px;top:487px;font-size:12px;color:#8a8a8a;letter-spacing:0.1px">Total records: 1</span>
<div class="vline" style="left:1069px;top:478px;height:30px;background:#d9d9d9"></div>
<div class="vline" style="left:1113px;top:478px;height:30px;background:#d9d9d9"></div>
<div class="vline" style="left:1145px;top:478px;height:30px;background:#d9d9d9"></div>
<svg style="left:1088px;top:488px" width="8" height="9" viewBox="0 0 8 9"><path d="M7.4 0.6 V8.4 L0.6 4.5Z" fill="#d4d4d4"/></svg>
<span class="t" style="left:1126px;top:487px;font-size:12px;font-weight:bold;color:#d0d0d0">1</span>
<svg style="left:1164px;top:488px" width="8" height="9" viewBox="0 0 8 9"><path d="M0.6 0.6 V8.4 L7.4 4.5Z" fill="#d4d4d4"/></svg>
<span class="t fl" id="lcd" style="left:606px;top:534px">Check-in date</span>
<svg style="left:676px;top:533px" width="10" height="10" viewBox="-5 -5 10 10"><circle r="4" fill="#fff" stroke="#c8372d" stroke-width="0.9"/><path d="M0 -2.9 V2.9 M-2.9 0 H2.9 M-2 -2 L2 2 M2 -2 L-2 2" stroke="#c8372d" stroke-width="0.8"/></svg>
<div class="abs fi" style="left:606px;top:545px;width:107px;height:20px"></div>
<span class="t fv" style="left:612px;top:549px">8/26</span>
<div class="abs fb" style="left:714px;top:545px"></div>
<div class="abs fb" style="left:732px;top:545px"></div>
<span class="t fl" id="lct" style="left:757px;top:534px">Check-in time</span>
<svg style="left:826px;top:533px" width="10" height="10" viewBox="-5 -5 10 10"><circle r="4" fill="#fff" stroke="#c8372d" stroke-width="0.9"/><path d="M0 -2.9 V2.9 M-2.9 0 H2.9 M-2 -2 L2 2 M2 -2 L-2 2" stroke="#c8372d" stroke-width="0.8"/></svg>
<div class="abs fi" style="left:757px;top:545px;width:134px;height:20px"></div>
<span class="t fv" style="left:763px;top:549px">14:56</span>
<span class="t fl" style="left:606px;top:574px">Condition</span>
<div class="abs fi dis" style="left:606px;top:585px;width:103px;height:20px"></div>
<div class="abs fb" style="left:710px;top:585px"></div>
<div class="abs fb" style="left:730px;top:585px"></div>
<span class="t fl" style="left:759px;top:573px">Certificate</span>
<div class="abs fi dis" style="left:759px;top:586px;width:111px;height:20px"></div>
<div class="abs fb dis" style="left:873px;top:584px"></div>
<svg style="left:715px;top:548px" width="14" height="14" viewBox="0 0 14 14"><rect x="0.7" y="2.2" width="12.6" height="11" fill="#fff" stroke="#222" stroke-width="1.2"/><rect x="0.7" y="2.2" width="12.6" height="2.6" fill="#222"/><path d="M3.6 0.4 V3.2 M10.4 0.4 V3.2" stroke="#222" stroke-width="1.5"/><path d="M0.7 7.6 H13.3 M0.7 10.4 H13.3 M3.9 4.8 V13.2 M7 4.8 V13.2 M10.1 4.8 V13.2" stroke="#222" stroke-width="1.25"/></svg>
<svg style="left:734px;top:548px" width="14" height="14" viewBox="0 0 14 14"><g transform="translate(7.2 6.6) rotate(45)"><rect x="-1.35" y="-8.2" width="2.7" height="7" rx="1.2" fill="#222"/><rect x="-2.7" y="-1.9" width="5.4" height="2.5" fill="#222"/><path d="M-2.7 1.3 H2.7 L3.7 6.6 H-3.7Z" fill="#222"/><path d="M-1.3 3.4 V6.4 M1.2 3.4 V6.4" stroke="#ececec" stroke-width="0.5"/></g></svg>
<svg style="left:712px;top:588px" width="14" height="14" viewBox="0 0 14 14"><circle cx="8.4" cy="5.4" r="4" fill="#fff" stroke="#222" stroke-width="1.7"/><path d="M5.6 8.4 L1.4 12.6" stroke="#222" stroke-width="2.3" stroke-linecap="round"/></svg>
<svg style="left:732px;top:588px" width="14" height="14" viewBox="0 0 14 14"><g transform="translate(7.2 6.6) rotate(45)"><rect x="-1.35" y="-8.2" width="2.7" height="7" rx="1.2" fill="#222"/><rect x="-2.7" y="-1.9" width="5.4" height="2.5" fill="#222"/><path d="M-2.7 1.3 H2.7 L3.7 6.6 H-3.7Z" fill="#222"/><path d="M-1.3 3.4 V6.4 M1.2 3.4 V6.4" stroke="#ececec" stroke-width="0.5"/></g></svg>
<svg style="left:876px;top:588px" width="12" height="12" viewBox="0 0 12 12"><path d="M1.6 3 Q1.6 1 3.4 1 Q5 1 5 3 V4 H7 V3 Q7 1 8.6 1 Q10.4 1 10.4 3 L11.6 9 Q11.6 11 9.4 11 Q7.4 11 7.2 9 V7 H4.8 V9 Q4.6 11 2.6 11 Q0.4 11 0.4 9Z" fill="#c9c9c9"/></svg>
<div class="abs" style="left:901px;top:536px;width:301px;height:77px;border:1px solid #bdbdbd"></div>
<span class="t fl" style="left:909px;top:531px;background:#f5f5f5;padding:0 1px">Action</span>
<div class="rd on" style="left:910px;top:553px"></div>
<span class="t fl" style="left:927px;top:555px">Enable for use</span>
<div class="rd off" style="left:910px;top:571px"></div>
<span class="t fl" style="left:927px;top:573px">Send for maintenance</span>
<div class="rd " style="left:910px;top:589px"></div>
<span class="t fl" style="left:927px;top:591px">Disable asset</span>
<span class="t fl" style="left:606px;top:638px">Created on</span>
<div class="abs fi dis" style="left:606px;top:649px;width:75px;height:20px"></div>
<span class="t fv" style="left:612px;top:653px">2/17</span>
<span class="t fl" style="left:691px;top:638px">Last updated</span>
<div class="abs fi dis" style="left:691px;top:649px;width:75px;height:20px"></div>
<span class="t fv" style="left:697px;top:653px">2/17</span>
<span class="t fl" style="left:776px;top:638px">Updated by</span>
<div class="abs fi dis" style="left:776px;top:649px;width:421px;height:20px"></div>
<span class="t fv" style="left:782px;top:653px">Kevin J. Harper</span>

</body>
</html>
